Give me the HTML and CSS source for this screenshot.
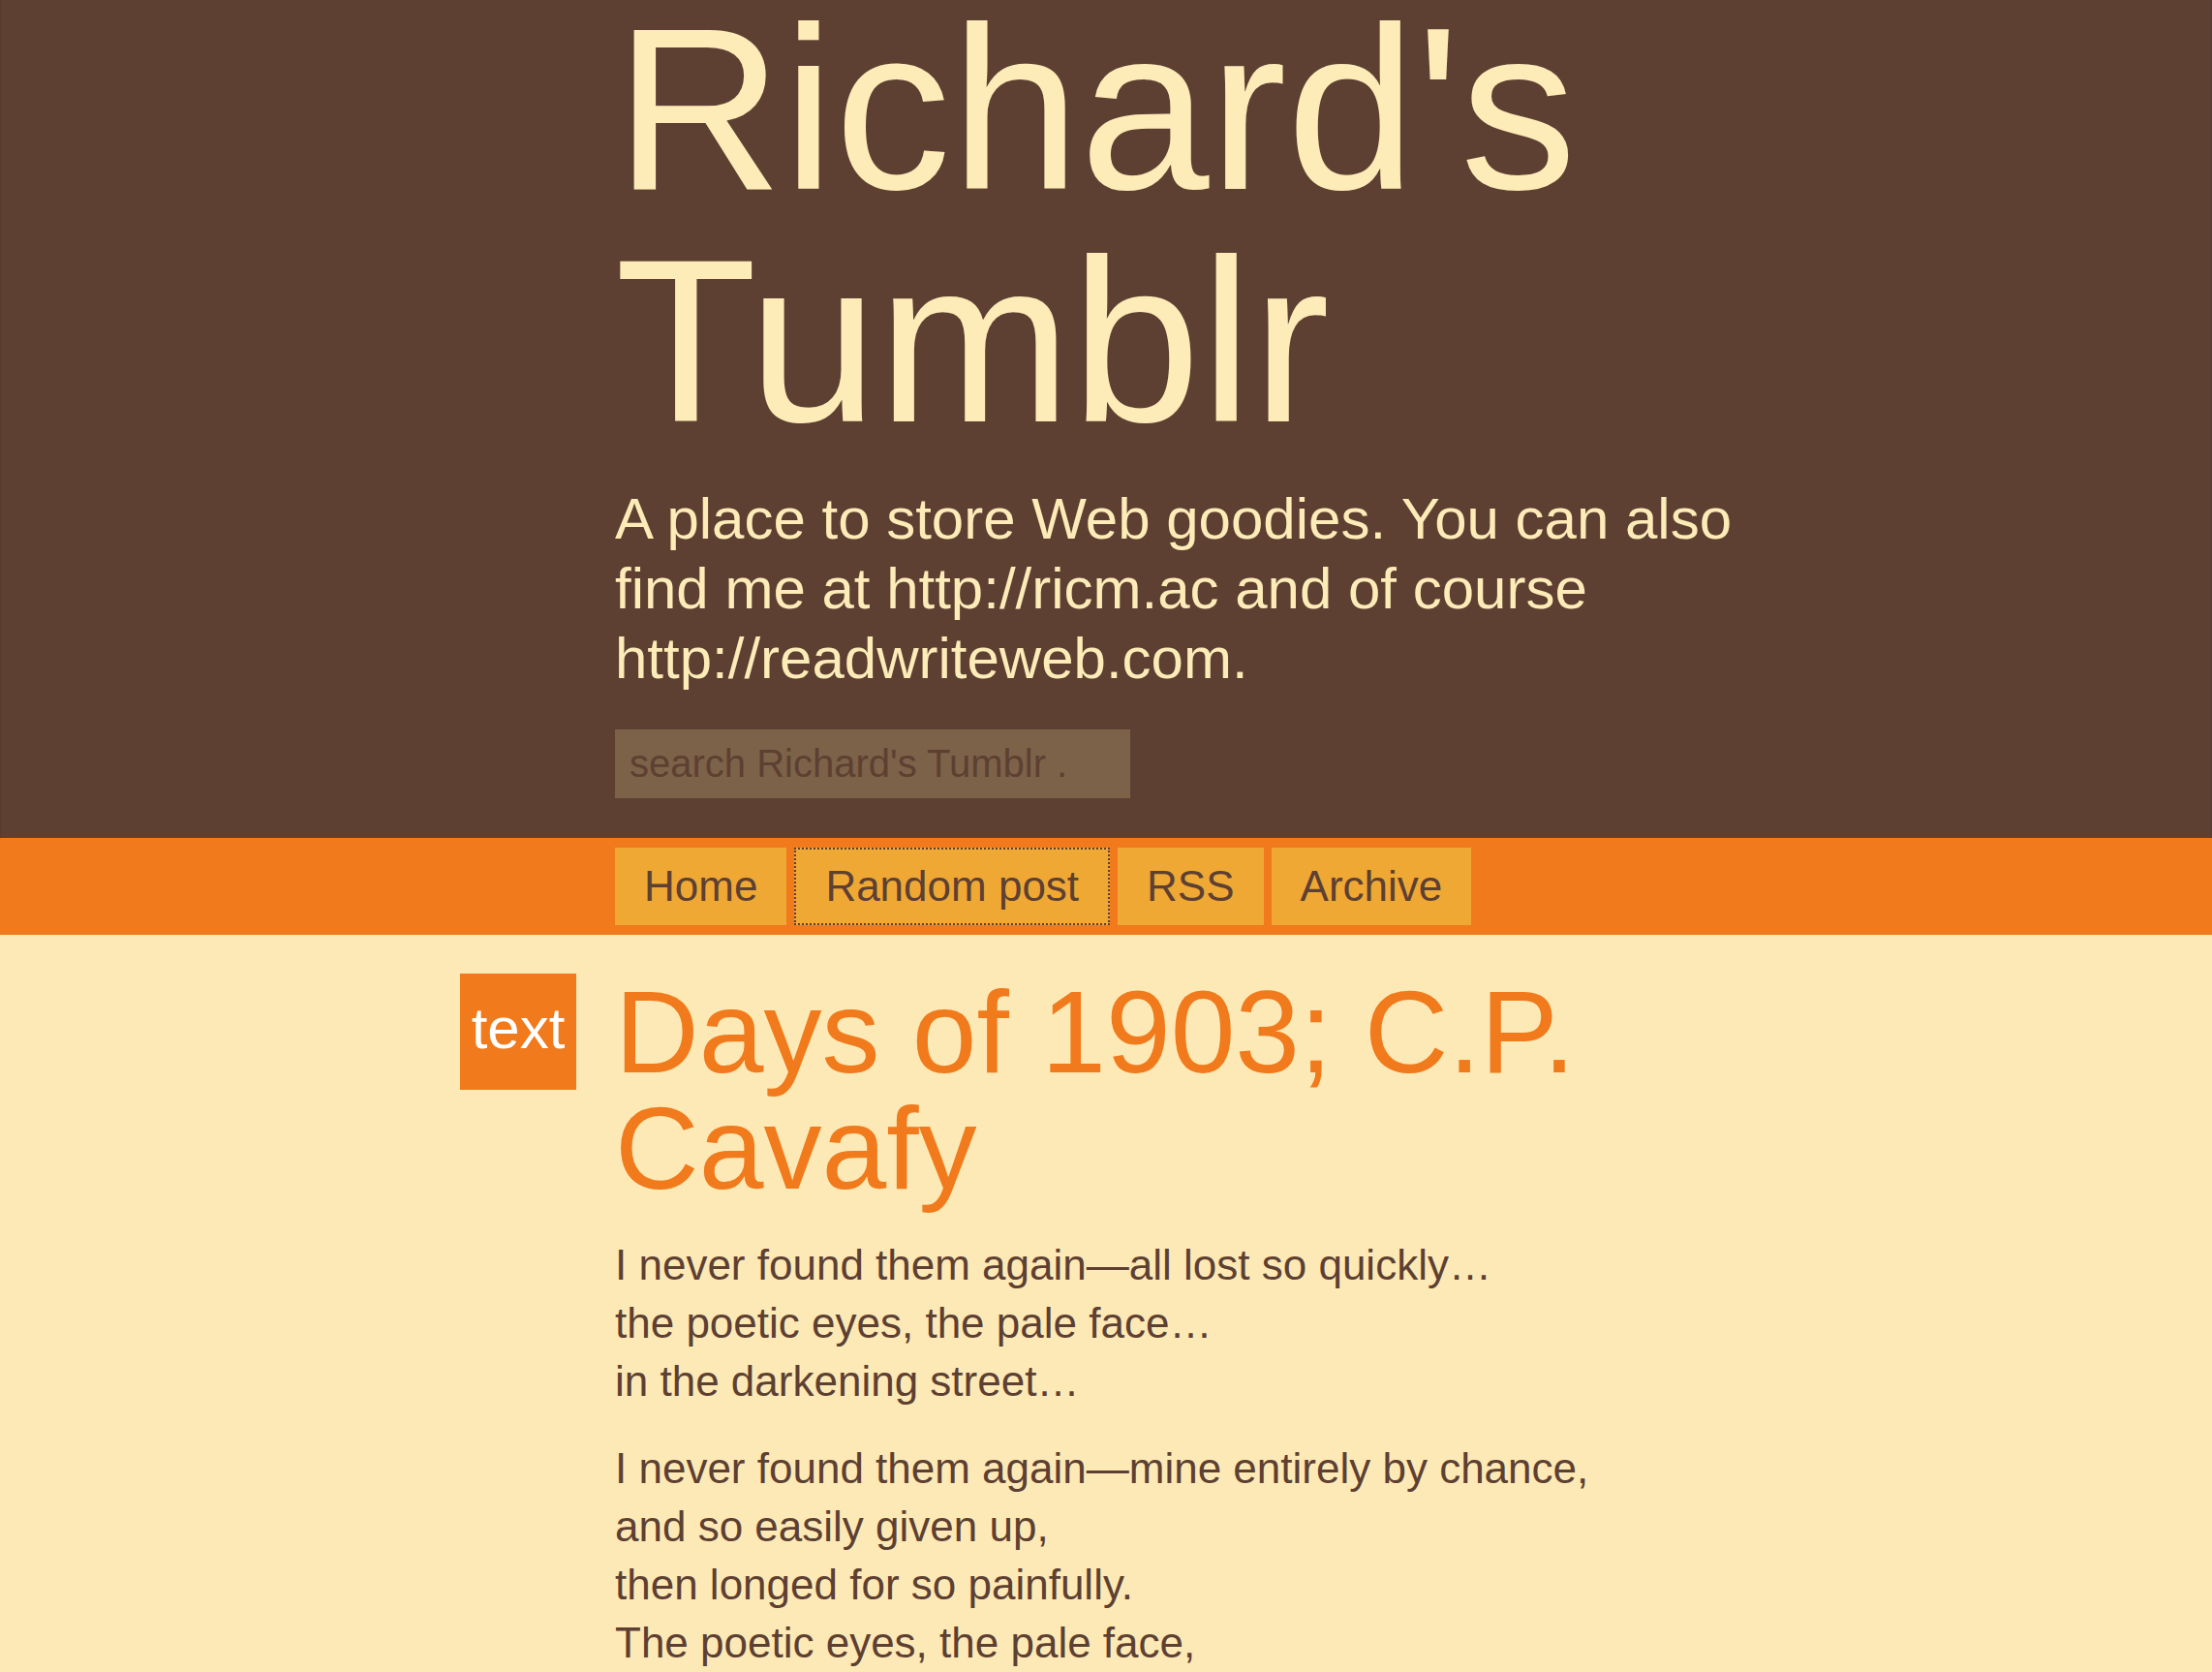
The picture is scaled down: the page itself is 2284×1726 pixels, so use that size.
FILE: index.html
```html
<!DOCTYPE html>
<html lang="en">
<head>
<meta charset="utf-8">
<title>Richard's Tumblr</title>
<link rel="stylesheet" href="styles.css">
</head>
<body>
<header class="masthead">
  <div class="wrap">
    <div class="col">
      <h1 class="site-title">Richard's Tumblr</h1>
      <p class="site-desc">A place to store Web goodies. You can also find me at http://ricm.ac and of course http://readwriteweb.com.</p>
      <form class="search"><input class="search-input" type="text" placeholder="search Richard's Tumblr ."></form>
    </div>
  </div>
</header>
<nav class="navbar">
  <div class="wrap">
    <div class="col nav-links">
      <a class="nav-link" href="#">Home</a>
      <a class="nav-link focused" href="#">Random post</a>
      <a class="nav-link" href="#">RSS</a>
      <a class="nav-link" href="#">Archive</a>
    </div>
  </div>
</nav>
<main class="wrap">
  <article class="post">
    <div class="post-type">text</div>
    <div class="post-body">
      <h2 class="post-title">Days of 1903; C.P. Cavafy</h2>
      <p>I never found them again—all lost so quickly…<br>the poetic eyes, the pale face…<br>in the darkening street…</p>
      <p>I never found them again—mine entirely by chance,<br>and so easily given up,<br>then longed for so painfully.<br>The poetic eyes, the pale face,<br>those lips—I never found them again.</p>
    </div>
  </article>
</main>
</body>
</html>
```
FILE: styles.css
```css
html, body {
  margin: 0;
  padding: 0;
}
body {
  background: #fde9b5;
  color: #5d4032;
  font-family: "Liberation Sans", Arial, sans-serif;
  overflow: hidden;
}
.wrap {
  width: 1334px;
  margin: 0 auto;
}
.col {
  padding-left: 160px;
}
.masthead {
  background: #5d4032;
  padding-bottom: 41px;
  box-shadow: inset 0 2px 2px rgba(0, 0, 0, 0.25);
}
.site-title {
  margin: -8px 0 0;
  font-size: 240px;
  line-height: 240px;
  font-weight: normal;
  color: #fdebb8;
}
.site-desc {
  margin: 28px 0 0;
  font-size: 60px;
  line-height: 72px;
  color: #fdebb8;
}
.search {
  margin: 37px 0 0;
}
.search-input {
  display: block;
  box-sizing: border-box;
  width: 532px;
  height: 71px;
  border: 0;
  padding: 0 15px;
  background: #7c6249;
  color: #5d4032;
  font-family: "Liberation Sans", Arial, sans-serif;
  font-size: 40px;
  outline: none;
}
.search-input::placeholder {
  color: #5d4032;
  opacity: 1;
}
.navbar {
  background: #f07a1c;
  padding: 10px 0;
}
.nav-links {
  display: flex;
  gap: 8px;
}
.nav-link {
  display: block;
  height: 80px;
  line-height: 80px;
  padding: 0 30px;
  background: #efa834;
  color: #5d4032;
  font-size: 44px;
  text-decoration: none;
}
.nav-link.focused {
  padding: 0 32px;
  outline: 2px dotted #5d4032;
  outline-offset: -2px;
}
.post {
  display: grid;
  grid-template-columns: 160px 1fr;
  padding-top: 40px;
}
.post-type {
  width: 120px;
  height: 120px;
  line-height: 114px;
  background: #f07a1c;
  color: #ffffff;
  font-size: 60px;
  text-align: center;
}
.post-title {
  margin: 0 0 31px;
  font-size: 120px;
  line-height: 120px;
  font-weight: normal;
  color: #f07a1c;
}
.post-body p {
  margin: 0 0 30px;
  font-size: 44px;
  line-height: 60px;
}
```
